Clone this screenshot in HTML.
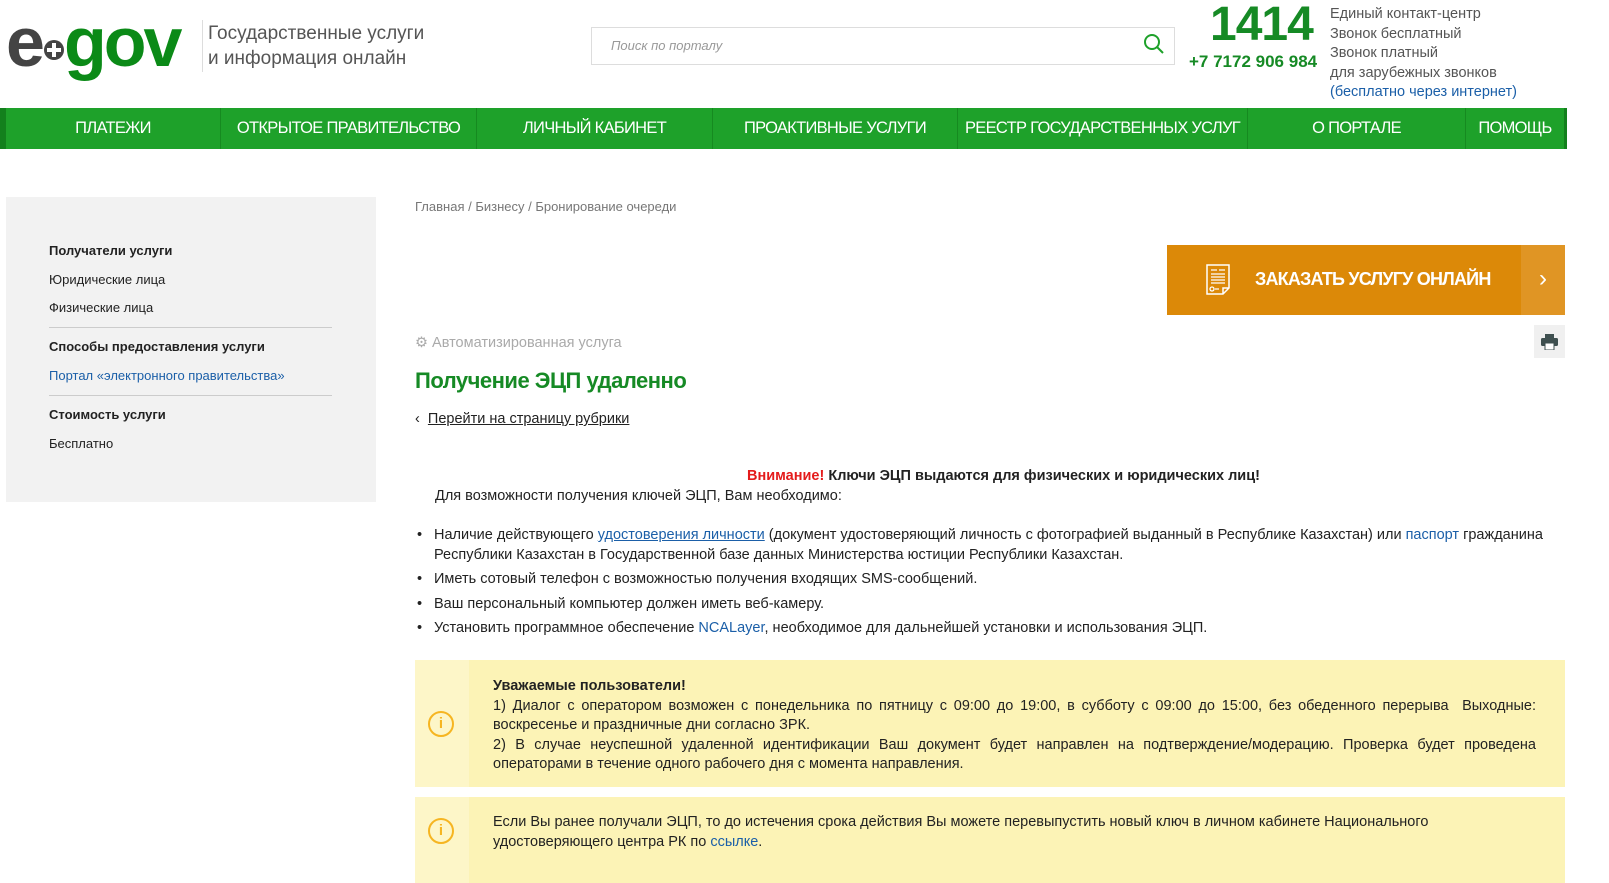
<!DOCTYPE html>
<html><head><meta charset="utf-8"><style>
*{margin:0;padding:0;box-sizing:border-box}
body{width:1609px;height:883px;overflow:hidden;background:#fff;font-family:"Liberation Sans",sans-serif;color:#222;position:relative}
.a{position:absolute}
a{color:#1b5fa8;text-decoration:none}
.nav{left:0;top:108px;width:1567px;height:41px;background:#1ea12a;border-left:6px solid #13801d;border-right:3px solid #13801d}
.nav div{position:absolute;top:0;height:41px;line-height:41px;color:#fff;font-size:16.5px;text-align:center;border-right:1px solid #168a20;letter-spacing:-0.7px;white-space:nowrap}
.side{left:6px;top:197px;width:370px;height:305px;background:#f2f2f2}
.side p{position:absolute;left:43px;font-size:13px;color:#222}
.side b{font-size:13px}
.side hr{position:absolute;left:43px;width:283px;border:0;border-top:1px solid #ccc}
.t{font-size:14.5px;line-height:19.5px}
.box{left:415px;width:1150px;background:#fcf3b6}
.box .ic{position:absolute;left:0;top:0;bottom:0;width:54px;background:#fdf6c8}
.circ{position:absolute;left:13px;width:26px;height:26px;border:2.5px solid #f6b521;border-radius:50%;color:#f6b521;font-size:15px;text-align:center;line-height:21px;font-weight:bold}
</style></head><body>
<div class="a" style="left:6px;top:2px;font-size:70px;font-weight:bold;letter-spacing:-3px;line-height:80px"><span style="color:#444">e</span><span style="display:inline-block;width:22px"></span><span style="color:#0b8a17">gov</span></div>
<svg class="a" style="left:42px;top:38px" width="24" height="24" viewBox="0 0 24 24"><circle cx="12" cy="12" r="10" fill="#444"/><path d="M12 5v14M5 12h14" stroke="#fff" stroke-width="4"/></svg>
<div class="a" style="left:202px;top:20px;width:1px;height:52px;background:#ddd"></div>
<div class="a" style="left:208px;top:21px;font-size:19px;line-height:25px;color:#555">Государственные услуги<br>и информация онлайн</div>
<div class="a" style="left:591px;top:27px;width:584px;height:38px;border:1px solid #ddd"></div>
<div class="a" style="left:611px;top:38px;font-size:13px;font-style:italic;color:#999">Поиск по порталу</div>
<svg class="a" style="left:1142px;top:32px" width="24" height="24" viewBox="0 0 24 24"><circle cx="10" cy="10" r="7" fill="none" stroke="#1ea12a" stroke-width="2"/><path d="M15 15l6 6" stroke="#1ea12a" stroke-width="2"/></svg>
<div class="a" style="left:1210px;top:-3px;font-size:48px;font-weight:bold;color:#168a25;letter-spacing:-1px">1414</div>
<div class="a" style="left:1189px;top:52px;font-size:17px;font-weight:bold;color:#168a25">+7 7172 906 984</div>
<div class="a" style="left:1330px;top:5px;font-size:14.5px;line-height:19.5px;color:#555">Единый контакт-центр<br>Звонок бесплатный<br>Звонок платный<br>для зарубежных звонков<br><span style="color:#1b5fa8">(бесплатно через интернет)</span></div>
<div class="a nav">
<div style="left:0;width:215px">ПЛАТЕЖИ</div>
<div style="left:215px;width:256px">ОТКРЫТОЕ ПРАВИТЕЛЬСТВО</div>
<div style="left:471px;width:236px">ЛИЧНЫЙ КАБИНЕТ</div>
<div style="left:707px;width:245px">ПРОАКТИВНЫЕ УСЛУГИ</div>
<div style="left:952px;width:290px">РЕЕСТР ГОСУДАРСТВЕННЫХ УСЛУГ</div>
<div style="left:1242px;width:218px">О ПОРТАЛЕ</div>
<div style="left:1460px;width:98px;border:0">ПОМОЩЬ</div>
</div>
<div class="a side">
<p style="top:46px"><b>Получатели услуги</b></p>
<p style="top:75px">Юридические лица</p>
<p style="top:103px">Физические лица</p>
<hr style="top:130px">
<p style="top:142px"><b>Способы предоставления услуги</b></p>
<p style="top:171px;color:#1b5fa8">Портал «электронного правительства»</p>
<hr style="top:198px">
<p style="top:210px"><b>Стоимость услуги</b></p>
<p style="top:239px">Бесплатно</p>
</div>
<div class="a" style="left:415px;top:199px;font-size:13px;color:#777">Главная / Бизнесу / Бронирование очереди</div>
<div class="a" style="left:1167px;top:245px;width:398px;height:70px;background:#dc8908"></div>
<div class="a" style="left:1521px;top:245px;width:44px;height:70px;background:#e09524;color:#fff;font-size:24px;text-align:center;line-height:68px">›</div>
<svg class="a" style="left:1206px;top:264px" width="24" height="32" viewBox="0 0 24 32"><path d="M1 1h22v23l-6 6H1z M17 30v-6h6" fill="none" stroke="#fff" stroke-width="1.5"/><path d="M5 6h6M13 6h6M5 10h14M5 13h14M5 16h14M5 19h14M9 25h4" stroke="#fff" stroke-width="1.3"/><circle cx="6" cy="25" r="2" fill="none" stroke="#fff" stroke-width="1.3"/></svg>
<div class="a" style="left:1255px;top:269px;font-size:18px;font-weight:bold;color:#fff;letter-spacing:-0.8px">ЗАКАЗАТЬ УСЛУГУ ОНЛАЙН</div>
<div class="a" style="left:1534px;top:325px;width:31px;height:33px;background:#f0f0f0"></div>
<svg class="a" style="left:1541px;top:334px" width="17" height="16" viewBox="0 0 17 16"><rect x="4" y="0" width="9" height="4" fill="#3f5050"/><rect x="0" y="4" width="17" height="8" rx="1.5" fill="#3f5050"/><rect x="4" y="9" width="9" height="7" fill="#fff" stroke="#3f5050"/></svg>
<div class="a" style="left:415px;top:335px;font-size:14.5px;color:#aaa">⚙ Автоматизированная услуга</div>
<div class="a" style="left:415px;top:368px;font-size:22px;font-weight:bold;color:#168a25;letter-spacing:-0.5px">Получение ЭЦП удаленно</div>
<div class="a" style="left:415px;top:411px;font-size:14.5px;color:#222">‹&nbsp; <u>Перейти на страницу рубрики</u></div>
<div class="a t" style="left:747px;top:467px;font-weight:bold"><span style="color:#e41b1b">Внимание!</span> Ключи ЭЦП выдаются для физических и юридических лиц!</div>
<div class="a t" style="left:435px;top:487px">Для возможности получения ключей ЭЦП, Вам необходимо:</div>
<ul class="a t" style="left:434px;top:526px;width:1130px;padding-left:0;list-style:none">
<li style="position:relative;margin-bottom:5px"><span style="position:absolute;left:-17px">•</span>Наличие действующего <a href="#" style="text-decoration:underline">удостоверения личности</a> (документ удостоверяющий личность с фотографией выданный в Республике Казахстан) или <a href="#">паспорт</a> гражданина Республики Казахстан в Государственной базе данных Министерства юстиции Республики Казахстан.</li>
<li style="position:relative;margin-bottom:5px"><span style="position:absolute;left:-17px">•</span>Иметь сотовый телефон с возможностью получения входящих SMS-сообщений.</li>
<li style="position:relative;margin-bottom:5px"><span style="position:absolute;left:-17px">•</span>Ваш персональный компьютер должен иметь веб-камеру.</li>
<li style="position:relative"><span style="position:absolute;left:-17px">•</span>Установить программное обеспечение <a href="#">NCALayer</a>, необходимое для дальнейшей установки и использования ЭЦП.</li>
</ul>
<div class="a box" style="top:660px;height:127px"><div class="ic"></div><div class="circ" style="top:51px">i</div>
<div class="a t" style="left:78px;top:17px;width:1043px;text-align:justify"><b>Уважаемые пользователи!</b><br>1) Диалог с оператором возможен с понедельника по пятницу с 09:00 до 19:00, в субботу с 09:00 до 15:00, без обеденного перерыва&nbsp; Выходные: воскресенье и праздничные дни согласно ЗРК.<br>2) В случае неуспешной удаленной идентификации Ваш документ будет направлен на подтверждение/модерацию. Проверка будет проведена операторами в течение одного рабочего дня с момента направления.</div></div>
<div class="a box" style="top:797px;height:86px"><div class="ic"></div><div class="circ" style="top:21px">i</div>
<div class="a t" style="left:78px;top:16px;width:1043px">Если Вы ранее получали ЭЦП, то до истечения срока действия Вы можете перевыпустить новый ключ в личном кабинете Национального удостоверяющего центра РК по <a href="#">ссылке</a>.</div></div>
</body></html>
